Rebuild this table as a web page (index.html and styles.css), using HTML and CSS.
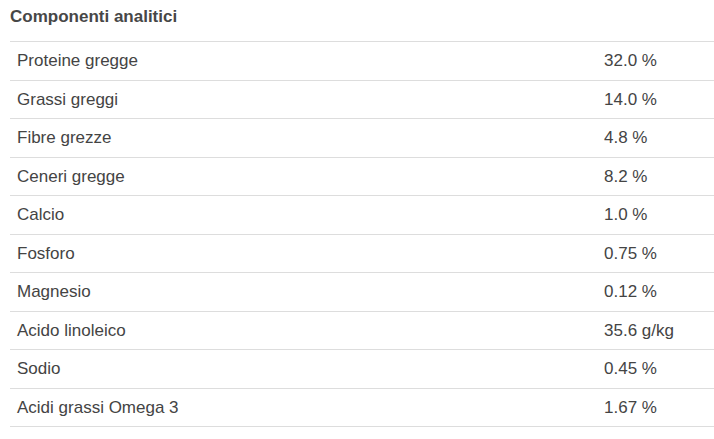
FILE: index.html
```html
<!DOCTYPE html>
<html lang="it">
<head>
<meta charset="utf-8">
<link rel="stylesheet" href="styles.css">
</head>
<body>
<section class="panel">
  <h2 class="title">Componenti analitici</h2>
  <table class="comp">
    <tbody>
      <tr><td class="name">Proteine gregge</td><td class="val">32.0 %</td></tr>
      <tr><td class="name">Grassi greggi</td><td class="val">14.0 %</td></tr>
      <tr><td class="name">Fibre grezze</td><td class="val">4.8 %</td></tr>
      <tr><td class="name">Ceneri gregge</td><td class="val">8.2 %</td></tr>
      <tr><td class="name">Calcio</td><td class="val">1.0 %</td></tr>
      <tr><td class="name">Fosforo</td><td class="val">0.75 %</td></tr>
      <tr><td class="name">Magnesio</td><td class="val">0.12 %</td></tr>
      <tr><td class="name">Acido linoleico</td><td class="val">35.6 g/kg</td></tr>
      <tr><td class="name">Sodio</td><td class="val">0.45 %</td></tr>
      <tr><td class="name">Acidi grassi Omega 3</td><td class="val">1.67 %</td></tr>
    </tbody>
  </table>
</section>
</body>
</html>
```
FILE: styles.css
```css
html, body {
  margin: 0;
  padding: 0;
  background: #fff;
}
body {
  font-family: "Liberation Sans", Arial, sans-serif;
  color: #444;
}
.panel {
  padding-left: 10px;
}
.title {
  margin: 7px 0 15px 0;
  font-size: 17px;
  line-height: 19px;
  font-weight: bold;
  color: #474747;
}
.comp {
  width: 100%;
  border-collapse: collapse;
  table-layout: fixed;
  font-size: 17px;
  line-height: 18px;
}
.comp td {
  border-top: 1px solid #ddd;
  border-bottom: 1px solid #ddd;
  padding: 10px 7px 9.5px 7px;
  vertical-align: top;
}
.comp .name {
  width: 573px;
}
.comp .val {
  text-align: left;
}
```
